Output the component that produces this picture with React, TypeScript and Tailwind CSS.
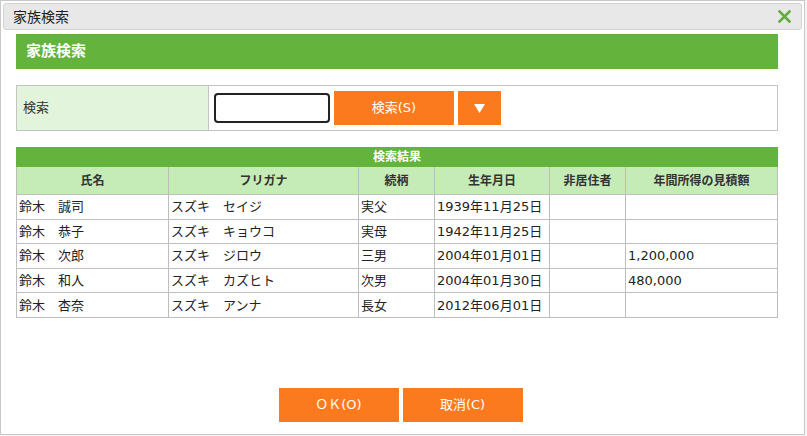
import React from 'react';

const rows = [
  { name: '鈴木　誠司', kana: 'スズキ　セイジ', rel: '実父', birth: '1939年11月25日', nonres: '', income: '' },
  { name: '鈴木　恭子', kana: 'スズキ　キョウコ', rel: '実母', birth: '1942年11月25日', nonres: '', income: '' },
  { name: '鈴木　次郎', kana: 'スズキ　ジロウ', rel: '三男', birth: '2004年01月01日', nonres: '', income: '1,200,000' },
  { name: '鈴木　和人', kana: 'スズキ　カズヒト', rel: '次男', birth: '2004年01月30日', nonres: '', income: '480,000' },
  { name: '鈴木　杏奈', kana: 'スズキ　アンナ', rel: '長女', birth: '2012年06月01日', nonres: '', income: '' },
];

const headers = ['氏名', 'フリガナ', '続柄', '生年月日', '非居住者', '年間所得の見積額'];

export default function App() {
  return (
    <div
      className="w-[807px] h-[436px] bg-[#f4f4f4] overflow-hidden"
      style={{ fontFamily: '"DejaVu Sans", "Noto Sans CJK JP", sans-serif' }}
    >
      <div className="w-[805px] h-[435px] bg-white border border-[#c8c8c8] flex flex-col px-[2px] pt-[2px]">
        {/* title bar */}
        <div className="h-[27px] bg-[#e8e8e8] border border-[#d4d4d4] rounded-[3px] flex items-center justify-between pl-[9px] pr-[10px]">
          <span className="text-[14px] text-[#222] leading-none">家族検索</span>
          <svg width="13" height="13" viewBox="0 0 13 13">
            <path d="M1.5 1.5 L11.5 11.5 M11.5 1.5 L1.5 11.5" stroke="#5fae3b" strokeWidth="2.6" strokeLinecap="square" />
          </svg>
        </div>

        <div className="px-[13px] pt-[4px] flex flex-col">
          {/* green header */}
          <div className="h-[35px] w-[762px] bg-[#63b33c] flex items-center pl-[10px]">
            <span className="text-white font-bold text-[15px] leading-none">家族検索</span>
          </div>

          {/* search row */}
          <div className="mt-[16px] w-[762px] h-[46px] border border-[#c4c4c4] flex">
            <div className="w-[192px] bg-[#e2f4dc] border-r border-[#c4c4c4] flex items-center pl-[6px] text-[13px] text-[#333]">
              検索
            </div>
            <div className="flex items-center pl-[5px] gap-[4px]">
              <input className="w-[116px] h-[30px] border-2 border-[#222] rounded-[4px] outline-none px-1" />
              <button className="w-[120px] h-[34px] bg-[#fc7a1e] text-white text-[13px]">検索(S)</button>
              <button className="w-[43px] h-[34px] bg-[#fc7a1e] flex items-center justify-center">
                <svg width="11" height="9" viewBox="0 0 11 9">
                  <path d="M0 0 H11 L5.5 9 Z" fill="#fff" />
                </svg>
              </button>
            </div>
          </div>

          {/* results table */}
          <table className="mt-[16px] w-[762px] border-collapse text-[13px] text-[#222] table-fixed">
            <colgroup>
              <col className="w-[152px]" />
              <col className="w-[190px]" />
              <col className="w-[76px]" />
              <col className="w-[115px]" />
              <col className="w-[76px]" />
              <col />
            </colgroup>
            <thead>
              <tr>
                <th colSpan={6} className="h-[19px] bg-[#63b33c] text-white font-bold text-[12px] leading-none p-0 border border-[#63b33c]">
                  検索結果
                </th>
              </tr>
              <tr>
                {headers.map((h) => (
                  <th
                    key={h}
                    className="h-[28px] bg-[#c5ebb6] border border-[#bdbdbd] font-bold text-[12px] text-[#333] p-0"
                  >
                    {h}
                  </th>
                ))}
              </tr>
            </thead>
            <tbody>
              {rows.map((r) => (
                <tr key={r.name} className="h-[24.6px]">
                  <td className="border border-[#bdbdbd] px-[2px] py-0 leading-none whitespace-nowrap">{r.name}</td>
                  <td className="border border-[#bdbdbd] px-[2px] py-0 leading-none whitespace-nowrap">{r.kana}</td>
                  <td className="border border-[#bdbdbd] px-[2px] py-0 leading-none whitespace-nowrap">{r.rel}</td>
                  <td className="border border-[#bdbdbd] px-[2px] py-0 leading-none whitespace-nowrap">{r.birth}</td>
                  <td className="border border-[#bdbdbd] px-[2px] py-0 leading-none whitespace-nowrap">{r.nonres}</td>
                  <td className="border border-[#bdbdbd] px-[2px] py-0 leading-none whitespace-nowrap">{r.income}</td>
                </tr>
              ))}
            </tbody>
          </table>
        </div>

        {/* footer buttons */}
        <div className="mt-auto mb-[12px] flex justify-center gap-[4px] pr-[4px]">
          <button className="w-[120px] h-[34px] bg-[#fc7a1e] text-white text-[13px]">ＯＫ(O)</button>
          <button className="w-[120px] h-[34px] bg-[#fc7a1e] text-white text-[13px]">取消(C)</button>
        </div>
      </div>
    </div>
  );
}
